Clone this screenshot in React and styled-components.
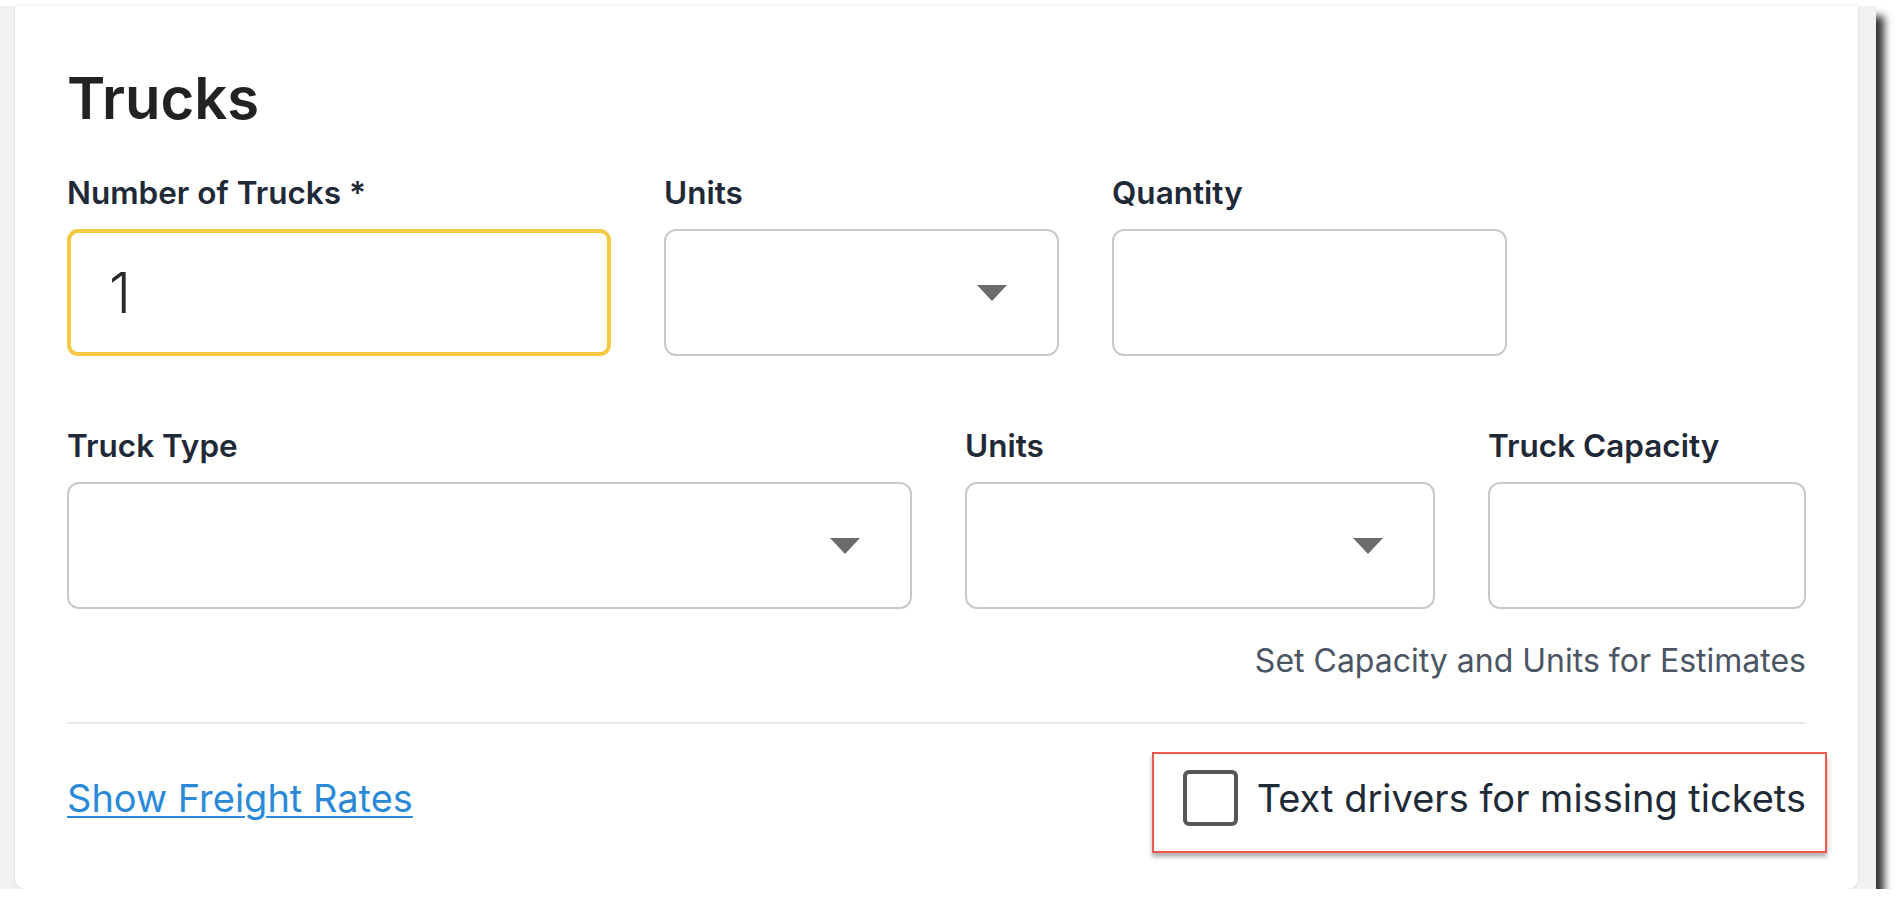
import React from 'react';
import styled, { createGlobalStyle } from 'styled-components';

const GlobalStyle = createGlobalStyle`
  html, body {
    margin: 0;
    padding: 0;
    background: #ffffff;
  }
  * {
    box-sizing: border-box;
  }
`;

const firstRow = [
  { label: 'Number of Trucks *', kind: 'number', value: '1' },
  { label: 'Units', kind: 'select' },
  { label: 'Quantity', kind: 'text' }
];

const secondRow = [
  { label: 'Truck Type', kind: 'select' },
  { label: 'Units', kind: 'select' },
  { label: 'Truck Capacity', kind: 'text' }
];

const Caret = () => (
  <svg width="30" height="16" viewBox="0 0 30 16">
    <polygon points="0,0 30,0 15,16" fill="#6b6b6b" />
  </svg>
);

const Field = ({ label, kind, value }) => (
  <FieldWrap>
    <Label>{label}</Label>
    {kind === 'number' && (
      <Box focused>
        <Value>{value}</Value>
      </Box>
    )}
    {kind === 'select' && (
      <Box select>
        <Caret />
      </Box>
    )}
    {kind === 'text' && <Box />}
  </FieldWrap>
);

const App = () => {
  return (
    <>
      <GlobalStyle />
      <Frame>
        <Card>
          <Title>Trucks</Title>
          <Row cols="544px 395px 395px" top={41}>
            {firstRow.map((f, i) => (
              <Field key={i} {...f} />
            ))}
          </Row>
          <Row cols="845px 470px 1fr" top={71}>
            {secondRow.map((f, i) => (
              <Field key={i} {...f} />
            ))}
          </Row>
          <Hint>Set Capacity and Units for Estimates</Hint>
          <Divider />
          <Footer>
            <RatesLink href="#">Show Freight Rates</RatesLink>
            <Highlight>
              <Checkbox />
              <CheckLabel>Text drivers for missing tickets</CheckLabel>
            </Highlight>
          </Footer>
        </Card>
      </Frame>
    </>
  );
};

export default App;

const Frame = styled.div`
  width: 1876px;
  margin-top: 6px;
  padding: 0 18px 0 15px;
  background: #f1f1f1;
  box-shadow: 8px 10px 8px rgba(0, 0, 0, 0.8);
  font-family: Inter, 'Liberation Sans', sans-serif;
`;

const Card = styled.div`
  background: #ffffff;
  border-radius: 0 0 10px 10px;
  box-shadow: 0 0 2px rgba(0, 0, 0, 0.18);
  padding: 57px 52px 36px 52px;
`;

const Title = styled.h2`
  margin: 0;
  font-size: 58px;
  line-height: 70px;
  font-weight: 600;
  color: #222222;
`;

const Row = styled.div`
  display: grid;
  grid-template-columns: ${props => props.cols};
  column-gap: 53px;
  margin-top: ${props => props.top}px;
`;

const FieldWrap = styled.div`
  display: flex;
  flex-direction: column;
`;

const Label = styled.label`
  font-size: 31.5px;
  line-height: 38px;
  font-weight: 600;
  color: #1f2937;
  margin-bottom: 17px;
`;

const Box = styled.div`
  height: 127px;
  border-radius: ${props => (props.focused ? '11px' : '12px')};
  border: ${props =>
    props.focused ? '4px solid #f6c945' : '2px solid #c9c9c9'};
  background: #ffffff;
  display: flex;
  align-items: center;
  justify-content: ${props => (props.select ? 'flex-end' : 'flex-start')};
  padding: ${props => (props.select ? '0 50px 0 0' : '0 0 0 38px')};
`;

const Value = styled.span`
  font-size: 56px;
  font-weight: 300;
  color: #2a2a2a;
`;

const Hint = styled.div`
  margin-top: 33px;
  text-align: right;
  font-size: 32px;
  line-height: 38px;
  color: #4b5563;
`;

const Divider = styled.hr`
  margin: 42px 0 0;
  border: none;
  height: 2px;
  background: #e8e9ee;
`;

const Footer = styled.div`
  margin-top: 28px;
  display: flex;
  align-items: center;
  justify-content: space-between;
`;

const RatesLink = styled.a`
  margin-bottom: 10px;
  font-size: 38px;
  color: #2b8ad8;
  text-decoration: underline;
  text-decoration-thickness: 2px;
  text-underline-offset: 4px;
`;

const Highlight = styled.div`
  height: 101px;
  margin-right: -21px;
  display: flex;
  align-items: center;
  gap: 19px;
  padding: 0 19px 9px 29px;
  border: 2px solid #ee5a4f;
  box-shadow: 0 4px 4px rgba(0, 0, 0, 0.3);
`;

const Checkbox = styled.span`
  width: 55px;
  height: 56px;
  border: 4px solid #575757;
  border-radius: 6px;
  background: #ffffff;
`;

const CheckLabel = styled.span`
  font-size: 38px;
  color: #1f2a37;
`;
